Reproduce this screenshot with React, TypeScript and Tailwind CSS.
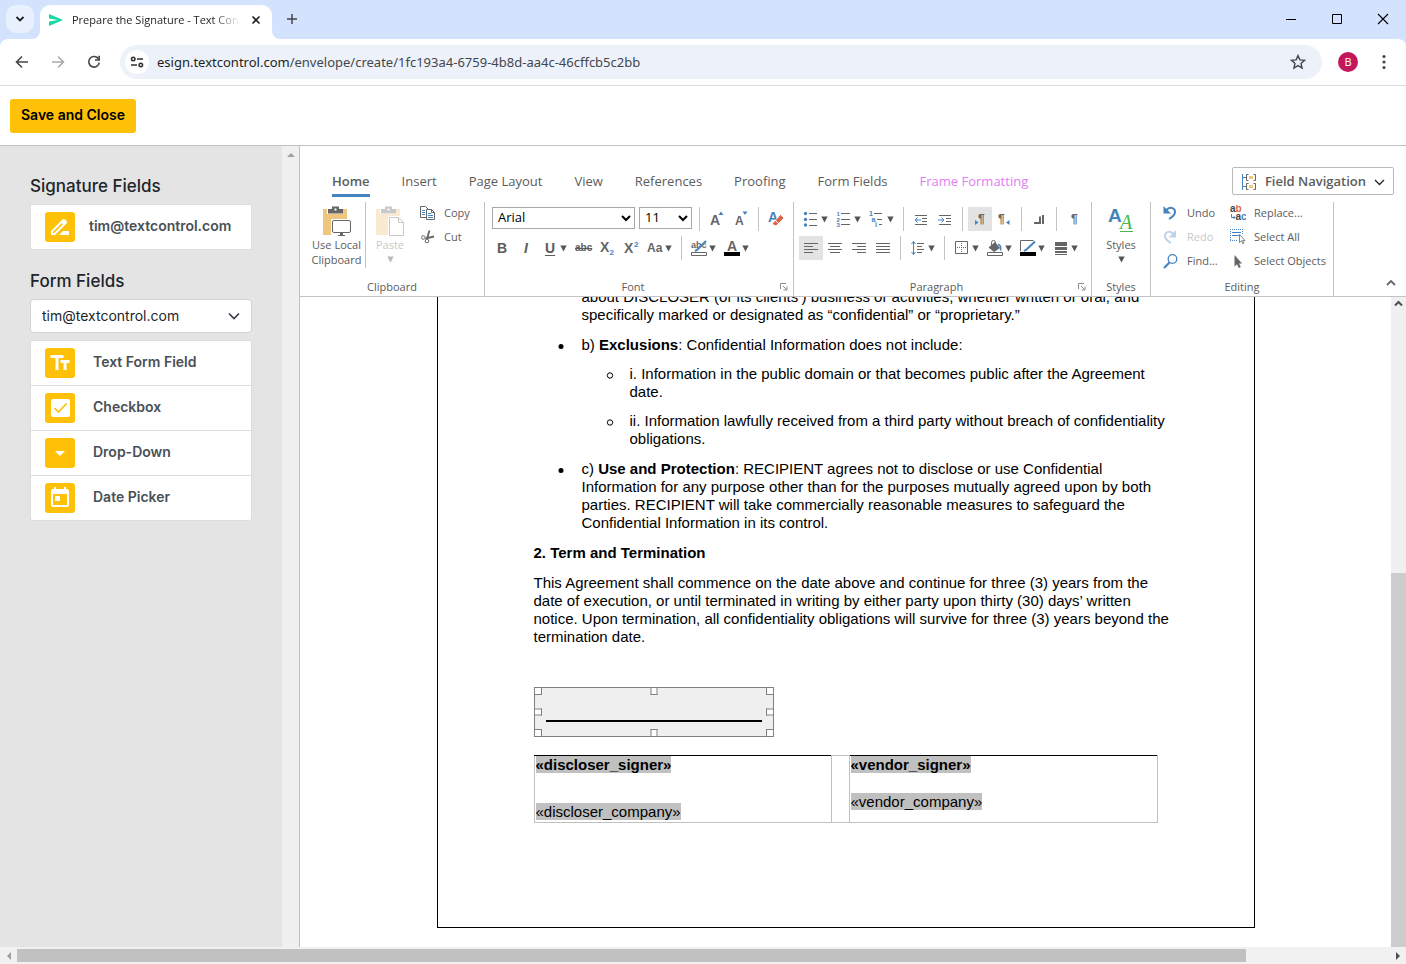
import type { ReactNode } from 'react';
import { MdArrowDropDown, MdDriveFileRenameOutline, MdTextFields, MdToday } from 'react-icons/md';

const INK = '#666666';
const BLUE = '#4682bd';

/* ---------- shared pieces ---------- */

function Icon({ children, size = 16, height }: { children: ReactNode; size?: number; height?: number }) {
  const h = height ?? size;
  return (
    <svg width={size} height={h} viewBox={`0 0 ${size} ${h}`} className="shrink-0" fill="none" aria-hidden="true">
      {children}
    </svg>
  );
}

function Arrow({ dim = false }: { dim?: boolean }) {
  return (
    <svg width="7" height="7" viewBox="0 0 7 7" className="shrink-0" aria-hidden="true">
      <path d="M0.3 0.5h6.4L3.5 6.5z" fill={dim ? '#b9b9b9' : '#555'} />
    </svg>
  );
}

function Tool({ label, active, children }: { label: string; active?: boolean; children: ReactNode }) {
  return (
    <button
      aria-label={label}
      className={`flex h-6 w-6 shrink-0 items-center justify-center ${active ? 'bg-[#e3e3e3]' : ''}`}
    >
      {children}
    </button>
  );
}

function SplitTool({ label, children }: { label: string; children: ReactNode }) {
  return (
    <button aria-label={label} className="flex h-6 shrink-0 items-center gap-0.5 px-1">
      {children}
      <Arrow />
    </button>
  );
}

function Sep() {
  return <span className="mx-[5px] h-6 w-px shrink-0 bg-[#c3c3c3]" />;
}

function Group({ title, launcher, className, children }: { title: string; launcher?: boolean; className: string; children: ReactNode }) {
  return (
    <section className={`relative flex shrink-0 flex-col border-r border-[#c3c3c3] ${className}`}>
      <div className="flex-1">{children}</div>
      <div className={`h-[18px] text-center text-[11px] leading-[18px] ${launcher ? 'pr-3' : ''}`}>{title}</div>
      {launcher && (
        <button aria-label={`${title} settings`} className="absolute right-[5px] bottom-[5px]">
          <Icon size={9}>
            <path d="M1.5 7V1.5H7M4 4l3.5 3.5M8 4.5V8H4.5" stroke="#8a8a8a" />
          </Icon>
        </button>
      )}
    </section>
  );
}

function SmallCommand({ label, icon, dim }: { label: string; icon: ReactNode; dim?: boolean }) {
  return (
    <button disabled={dim} className={`flex h-6 items-center gap-2 pb-0.5 text-[11px] whitespace-nowrap ${dim ? 'text-[#c8c8c8]' : ''}`}>
      {icon}
      {label}
    </button>
  );
}

/* ---------- browser frame ---------- */

function BrowserFrame() {
  return (
    <header className="shrink-0 bg-[#d3e3fd] font-['Open_Sans',sans-serif] text-[#1f1f1f]">
      <div className="flex h-[39px] items-end">
        <button aria-label="Search tabs" className="mr-1.5 mb-1.5 ml-1.5 flex h-7 w-7 items-center justify-center rounded-[10px] bg-[#e9f0fe]">
          <Icon size={10}>
            <path d="M1.5 3l3.5 3.5L8.5 3" stroke="#1f1f1f" strokeWidth="1.8" />
          </Icon>
        </button>
        <div className="relative flex h-[34px] w-[232px] items-center rounded-t-[10px] bg-white pb-[5px] pl-2">
          <svg className="absolute bottom-0 -left-2" width="8" height="8" viewBox="0 0 8 8">
            <path d="M8 0v8H0a8 8 0 0 0 8-8z" fill="#fff" />
          </svg>
          <svg className="absolute -right-2 bottom-0" width="8" height="8" viewBox="0 0 8 8">
            <path d="M0 0v8h8a8 8 0 0 1-8-8z" fill="#fff" />
          </svg>
          <Icon size={16}>
            <path d="M1 2l14 6L1 14V9.5l9-1.5-9-1.5z" fill="#14d9a4" />
          </Icon>
          <span className="ml-2 w-[168px] overflow-hidden pt-px text-[11px] whitespace-nowrap [mask-image:linear-gradient(to_right,#000_84%,transparent)]">
            Prepare the Signature - Text Control
          </span>
          <button aria-label="Close tab" className="ml-[11px]">
            <Icon size={10}>
              <path d="M1.5 1.5l7 7M8.5 1.5l-7 7" stroke="#1f1f1f" strokeWidth="1.6" />
            </Icon>
          </button>
        </div>
        <button aria-label="New tab" className="mb-3.5 ml-[14px]">
          <Icon size={12}>
            <path d="M6 1v10M1 6h10" stroke="#444746" strokeWidth="1.5" />
          </Icon>
        </button>
        <div className="mr-[17px] mb-3.5 ml-auto flex gap-[34px]">
          <button aria-label="Minimize">
            <Icon size={12}>
              <path d="M1 6.5h10" stroke="#000" />
            </Icon>
          </button>
          <button aria-label="Maximize">
            <Icon size={12}>
              <path d="M1.5 1.5h9v9h-9z" stroke="#000" />
            </Icon>
          </button>
          <button aria-label="Close window">
            <Icon size={12}>
              <path d="M1 1l10 10M11 1L1 11" stroke="#000" strokeWidth="1.1" />
            </Icon>
          </button>
        </div>
      </div>
      <div className="flex h-[47px] items-center rounded-t-lg border-b border-[#dadce0] bg-white pr-[14px] pl-[14px]">
        <div className="flex w-[106px] shrink-0 gap-5">
          <button aria-label="Back">
            <Icon size={16}>
              <path d="M8 2.5L2.5 8 8 13.5M2.5 8H14" stroke="#444746" strokeWidth="1.6" />
            </Icon>
          </button>
          <button aria-label="Forward">
            <Icon size={16}>
              <path d="M8 2.5L13.5 8 8 13.5M13.5 8H2" stroke="#a9abad" strokeWidth="1.6" />
            </Icon>
          </button>
          <button aria-label="Reload">
            <Icon size={16}>
              <path d="M12.6 5A5.3 5.3 0 1 0 13.3 8.7" stroke="#444746" strokeWidth="1.6" />
              <path d="M13.2 1.8V6H9" stroke="#444746" strokeWidth="1.6" />
            </Icon>
          </button>
        </div>
        <div className="flex h-[34px] flex-1 items-center rounded-full bg-[#edf1fa] pr-4 pl-[5px]">
          <button aria-label="View site information" className="flex h-6 w-6 items-center justify-center rounded-full bg-white">
            <Icon size={14}>
              <g stroke="#303030" strokeWidth="1.6">
                <circle cx="3.2" cy="4" r="1.7" />
                <path d="M7 4h6M1 10h6" />
                <circle cx="10.8" cy="10" r="1.7" />
              </g>
            </Icon>
          </button>
          <div className="relative ml-2 flex-1 font-['Noto_Sans',sans-serif] text-[13px] leading-5">
            <input aria-label="Address" className="absolute inset-0 w-full bg-transparent text-transparent outline-none" />
            <span>
              esign.textcontrol.com<span className="text-[#44474a]">/envelope/create/1fc193a4-6759-4b8d-aa4c-46cffcb5c2bb</span>
            </span>
          </div>
          <button aria-label="Bookmark">
            <Icon size={16}>
              <path d="M8 1.6l1.9 4.3 4.7.4-3.6 3.1 1.1 4.6L8 11.6 3.9 14 5 9.4 1.4 6.3l4.7-.4z" stroke="#444746" strokeWidth="1.4" />
            </Icon>
          </button>
        </div>
        <button aria-label="Profile" className="ml-4 h-5 w-5 rounded-full bg-[#c2185b] text-center text-[11px] leading-5 text-white">
          B
        </button>
        <button aria-label="Browser menu" className="ml-[18px]">
          <Icon size={16}>
            <g fill="#444746">
              <circle cx="8" cy="2.5" r="1.6" />
              <circle cx="8" cy="8" r="1.6" />
              <circle cx="8" cy="13.5" r="1.6" />
            </g>
          </Icon>
        </button>
      </div>
    </header>
  );
}

/* ---------- sidebar ---------- */

function Badge({ children }: { children: ReactNode }) {
  return <span className="flex h-[30px] w-[30px] items-center justify-center rounded-[3px] bg-[#ffc107] text-white">{children}</span>;
}

const formFields = [
  { label: 'Text Form Field', icon: <MdTextFields size={24} /> },
  {
    label: 'Checkbox',
    icon: (
      <Icon size={20}>
        <rect x="1" y="1" width="19" height="18" rx="2" fill="#fff" />
        <path d="M4.5 10l4 4 8-8.5" stroke="#ffc107" strokeWidth="1.7" />
      </Icon>
    ),
  },
  { label: 'Drop-Down', icon: <MdArrowDropDown size={24} /> },
  { label: 'Date Picker', icon: <MdToday size={24} /> },
];

function Sidebar() {
  return (
    <div className="flex w-[300px] shrink-0 border-r border-[#c0c0c0] font-['Inter',sans-serif]">
      <aside className="flex-1 bg-[#e4e4e4] px-[30px] pt-[30px]">
        <h2 className="text-[17px] leading-5 font-medium text-[#212529]">Signature Fields</h2>
        <button className="mt-2 flex h-[46px] w-full items-center gap-[14px] border border-[#dedfe0] bg-white pl-[14px] text-sm font-semibold text-[#495057]">
          <Badge>
            <MdDriveFileRenameOutline size={24} />
          </Badge>
          <span className="pb-0.5">tim@textcontrol.com</span>
        </button>
        <h2 className="mt-[21px] text-[17px] leading-5 font-medium text-[#212529]">Form Fields</h2>
        <div className="relative mt-2">
          <select
            aria-label="Signer"
            className="block h-[34px] w-full appearance-none rounded border border-[#ced4da] bg-white pl-[11px] text-sm text-[#212529]"
          >
            <option>tim@textcontrol.com</option>
          </select>
          <span className="pointer-events-none absolute top-[11px] right-3">
            <Icon size={12}>
              <path d="M1 3.5l5 5 5-5" stroke="#343a40" strokeWidth="1.6" />
            </Icon>
          </span>
        </div>
        <ul className="mt-[7px] divide-y divide-[#dcdddf] rounded-[3px] border border-[#dcdddf] bg-white">
          {formFields.map((f) => (
            <li key={f.label}>
              <button className="flex h-11 w-full items-center gap-[18px] pl-[14px] text-sm font-semibold text-[#495057]">
                <Badge>{f.icon}</Badge>
                <span className="pb-0.5">{f.label}</span>
              </button>
            </li>
          ))}
        </ul>
      </aside>
      <div className="flex w-[17px] justify-center bg-[#f0f0f0] pt-[7px]">
        <Icon size={8} height={4}>
          <path d="M0 4l4-4 4 4z" fill="#a0a0a0" />
        </Icon>
      </div>
    </div>
  );
}

/* ---------- ribbon ---------- */

const tabs = ['Home', 'Insert', 'Page Layout', 'View', 'References', 'Proofing', 'Form Fields', 'Frame Formatting'];

function tabTone(tab: string) {
  if (tab === 'Home') return 'border-[#4682bd] font-semibold';
  if (tab === 'Frame Formatting') return 'border-transparent text-[#e27df5]';
  return 'border-transparent';
}

function Lines({ rows }: { rows: [number, number][] }) {
  return (
    <Icon size={16}>
      {rows.map(([x, w], i) => (
        <path key={i} d={`M${x} ${3.5 + i * 3}h${w}`} stroke={INK} />
      ))}
    </Icon>
  );
}

function Glyph({ children, className = '' }: { children: ReactNode; className?: string }) {
  return <span className={`w-4 text-center font-['Liberation_Sans',sans-serif] text-sm leading-4 font-bold ${className}`}>{children}</span>;
}

function ClipboardIcon({ dim, variant }: { dim?: boolean; variant: 'screen' | 'page' }) {
  return (
    <svg width="30" height="30" viewBox="0 0 30 30" fill="none" opacity={dim ? 0.35 : 1} aria-hidden="true">
      <path d="M1 3h24v26H1z" fill="#eec67d" />
      <path d="M5 3h16v5H5z" fill="#fff" />
      <path d="M6 3h4V0.500h7V3h4v4.500H6z" fill={INK} />
      <path d="M12.500 2.500h2v2h-2z" fill="#fff" />
      {variant === 'screen' ? (
        <>
          <path d="M9 13h21v17H9z" fill="#fff" />
          <rect x="10.5" y="14.5" width="18" height="12" rx="1.5" stroke={INK} fill="#fff" />
          <path d="M18 27h3v2h-3zM16 29h7v1h-7z" fill={INK} />
        </>
      ) : (
        <>
          <path d="M13 10h17v20H13z" fill="#fff" />
          <path d="M14.5 11.5h9l5 5v13h-14zM23.5 11.5v5h5" stroke={INK} fill="#fff" />
        </>
      )}
    </svg>
  );
}

function FontSelect({ label, value, className }: { label: string; value: string; className: string }) {
  return (
    <div className={`relative shrink-0 ${className}`}>
      <select aria-label={label} className="block h-[22px] w-full appearance-none border border-[#a8a8a8] bg-white pl-[5px] text-[13px] text-black">
        <option>{value}</option>
      </select>
      <span className="pointer-events-none absolute top-1.5 right-1">
        <Icon size={10}>
          <path d="M1 3l4 4 4-4" stroke="#000" strokeWidth="2" />
        </Icon>
      </span>
    </div>
  );
}

function Ribbon() {
  return (
    <div className="z-10 shrink-0 border-b border-[#c3c3c3] bg-white text-[#5c5c5c]">
      <div className="flex h-14 items-end pr-3 pl-4">
        <nav className="mb-[5px] flex">
          {tabs.map((t) => (
            <button key={t} className="px-4 text-[13px] leading-5 whitespace-nowrap">
              <span className={`block border-b-3 pb-[3px] ${tabTone(t)}`}>{t}</span>
            </button>
          ))}
        </nav>
        <button className="mb-[7px] ml-auto flex h-7 w-[162px] items-center justify-between rounded-xs border border-[#b9b9b9] pt-0.5 pr-2 pl-2 text-[13px] font-semibold whitespace-nowrap">
          <Icon size={16}>
            <path d="M1.5 0v16M2 3.5h3M2 12.5h3" stroke={BLUE} />
            <path d="M7.5 0.5h-2v6h2M12.5 0.5h2v6h-2M7.5 9.5h-2v6h2M12.5 9.5h2v6h-2" stroke={INK} />
            <path d="M8 2h4v3H8zM8 11h4v3H8z" fill="#eec67d" />
          </Icon>
          Field Navigation
          <Icon size={11}>
            <path d="M1 3l4.5 4.5L10 3" stroke="#222" strokeWidth="1.3" />
          </Icon>
        </button>
      </div>

      <div className="flex h-[94px]">
        <Group title="Clipboard" className="w-[185px]">
          <div className="flex pl-2">
            <button className="flex h-[66px] w-[58px] flex-col items-center border-r border-[#c3c3c3] pt-1 text-[11px] leading-[15px] whitespace-nowrap">
              <ClipboardIcon variant="screen" />
              <span className="mt-px">Use Local</span>
              <span>Clipboard</span>
            </button>
            <button disabled className="ml-[9px] flex w-[30px] flex-col items-center pt-1 text-[11px] leading-[15px] text-[#c8c8c8]">
              <ClipboardIcon variant="page" dim />
              <span className="mt-px mb-1">Paste</span>
              <Arrow dim />
            </button>
            <div className="ml-[15px]">
              <SmallCommand
                label="Copy"
                icon={
                  <Icon>
                    <path d="M.5 1.5h5l3 3v8h-8z" stroke={INK} fill="#fff" />
                    <path d="M2 5.5h3M2 7.5h3M2 9.5h3" stroke={BLUE} />
                    <path d="M6.5 4.5h5l3 3v7h-8zM11.5 4.5v3h3" stroke={INK} fill="#fff" />
                    <path d="M8 8.5h3M8 10.5h5M8 12.5h5" stroke={BLUE} />
                  </Icon>
                }
              />
              <SmallCommand
                label="Cut"
                icon={
                  <Icon>
                    <path d="M9.5 1.500L7 9.500M14 7.500L5.500 9.500" stroke={INK} strokeWidth="1.8" />
                    <circle cx="3.3" cy="8.5" r="1.8" stroke={INK} />
                    <circle cx="7" cy="12" r="1.800" stroke={INK} />
                  </Icon>
                }
              />
            </div>
          </div>
        </Group>

        <Group title="Font" launcher className="w-[309px]">
          <div className="mt-[5px] flex pl-[7px]">
            <FontSelect label="Font family" value="Arial" className="w-[143px]" />
            <FontSelect label="Font size" value="11" className="mr-0.5 ml-1 w-[53px]" />
            <Sep />
            <Tool label="Grow font">
              <Icon>
                <text x="1" y="14" fill={INK} fontFamily="Liberation Sans" fontWeight="700" fontSize="14">A</text>
                <path d="M9.5 4L12 .5 14.5 4z" fill={BLUE} />
              </Icon>
            </Tool>
            <Tool label="Shrink font">
              <Icon>
                <text x="2" y="14" fill={INK} fontFamily="Liberation Sans" fontWeight="700" fontSize="12">A</text>
                <path d="M9.5 .5L12 4 14.5 .5z" fill={BLUE} />
              </Icon>
            </Tool>
            <Sep />
            <Tool label="Clear formatting">
              <Icon>
                <text x="0" y="11" fill={BLUE} fontFamily="Liberation Sans" fontWeight="700" fontSize="14">A</text>
                <path d="M12.5 3.500l3.500 3.500-7.500 7.500H6l-1.500-2z" fill="#dd6547" stroke="#fff" strokeWidth=".8" />
                <path d="M7 9l3.500 3.500" stroke="#fff" />
              </Icon>
            </Tool>
          </div>
          <div className="mt-[5px] flex pl-[5px]">
            <Tool label="Bold"><Glyph>B</Glyph></Tool>
            <Tool label="Italic"><Glyph className="italic">I</Glyph></Tool>
            <SplitTool label="Underline"><Glyph className="underline underline-offset-2">U</Glyph></SplitTool>
            <Tool label="Strikethrough"><Glyph className="-mx-1 text-[10px] line-through">abc</Glyph></Tool>
            <Tool label="Subscript">
              <Icon>
                <text x="1" y="12" fill={INK} fontFamily="Liberation Sans" fontWeight="700" fontSize="14">X</text>
                <text x="10.5" y="15" fill={BLUE} fontFamily="Liberation Sans" fontWeight="700" fontSize="8">2</text>
              </Icon>
            </Tool>
            <Tool label="Superscript">
              <Icon>
                <text x="1" y="13" fill={INK} fontFamily="Liberation Sans" fontWeight="700" fontSize="14">X</text>
                <text x="11" y="7" fill={BLUE} fontFamily="Liberation Sans" fontWeight="700" fontSize="8">2</text>
              </Icon>
            </Tool>
            <SplitTool label="Change case">
              <Icon>
                <text x="0" y="12" fill={INK} fontFamily="Liberation Sans" fontWeight="700" fontSize="12">Aa</text>
              </Icon>
            </SplitTool>
            <Sep />
            <SplitTool label="Text highlight">
              <Icon>
                <text x="0" y="8" fill={INK} fontFamily="Liberation Sans" fontWeight="700" fontSize="9">abc</text>
                <path d="M15 1L6 10l-2 1" stroke={BLUE} strokeWidth="2" />
                <path d="M.5 12.5h15v3H.5z" stroke={INK} fill="#fff" />
              </Icon>
            </SplitTool>
            <SplitTool label="Font color">
              <Icon>
                <text x="3" y="11" fill={INK} fontFamily="Liberation Sans" fontWeight="700" fontSize="14">A</text>
                <path d="M0 12h16v4H0z" fill="#000" />
              </Icon>
            </SplitTool>
          </div>
        </Group>

        <Group title="Paragraph" launcher className="w-[298px]">
          <div className="mt-[5px] flex pl-[5px]">
            <SplitTool label="Bullets">
              <Icon>
                <g fill={BLUE}>
                  <circle cx="2.5" cy="2.5" r="1.7" />
                  <circle cx="2.5" cy="8.5" r="1.7" />
                  <circle cx="2.5" cy="14" r="1.7" />
                </g>
                <path d="M6 2.5h8M6 8.5h8M6 14.5h8" stroke={INK} />
              </Icon>
            </SplitTool>
            <SplitTool label="Numbering">
              <Icon>
                <g fill={BLUE} fontFamily="Liberation Sans" fontWeight="700" fontSize="6">
                  <text x="0.5" y="5">1</text>
                  <text x="0.5" y="10.5">2</text>
                  <text x="0.5" y="16">3</text>
                </g>
                <path d="M5 2.5h9M5 8.5h9M5 13.5h9" stroke={INK} />
              </Icon>
            </SplitTool>
            <SplitTool label="Multilevel list">
              <Icon>
                <g fill={BLUE} fontFamily="Liberation Sans" fontWeight="700" fontSize="7">
                  <text x="0" y="5">1</text>
                  <text x="2.5" y="10.5">a</text>
                  <text x="6" y="16">i</text>
                </g>
                <path d="M5 2.5h8M8 8.5h5M10 13.5h3" stroke={INK} />
              </Icon>
            </SplitTool>
            <Sep />
            <Tool label="Decrease indent">
              <Icon>
                <path d="M2 4.5h12M9 7.5h5M9 10.5h5M2 13.5h12" stroke={INK} />
                <path d="M2 9h6M4.5 6.5L2 9l2.5 2.5" stroke={BLUE} />
              </Icon>
            </Tool>
            <Tool label="Increase indent">
              <Icon>
                <path d="M2 4.5h12M9 7.5h5M9 10.5h5M2 13.5h12" stroke={INK} />
                <path d="M1 9h6M4.5 6.5L7 9l-2.5 2.5" stroke={BLUE} />
              </Icon>
            </Tool>
            <Sep />
            <Tool label="Left to right" active>
              <Icon>
                <text x="6" y="12" fill={INK} fontFamily="Liberation Sans" fontWeight="700" fontSize="12">¶</text>
                <path d="M3 9l3.500 2.500L3 14z" fill={BLUE} />
              </Icon>
            </Tool>
            <Tool label="Right to left">
              <Icon>
                <text x="2" y="12" fill={INK} fontFamily="Liberation Sans" fontWeight="700" fontSize="12">¶</text>
                <path d="M13.500 9L10 11.500l3.500 2.500z" fill={BLUE} />
              </Icon>
            </Tool>
            <Sep />
            <Tool label="Tab stops">
              <Icon>
                <path d="M3 12h6V5.500M12 4v9" stroke={INK} strokeWidth="2" />
              </Icon>
            </Tool>
            <Sep />
            <Tool label="Control characters">
              <Icon>
                <text x="5" y="12" fill={INK} fontFamily="Liberation Sans" fontWeight="700" fontSize="12">¶</text>
              </Icon>
            </Tool>
          </div>
          <div className="mt-[5px] flex pl-[5px]">
            <Tool label="Align left" active><Lines rows={[[1, 14], [1, 9], [1, 14], [1, 9]]} /></Tool>
            <Tool label="Center"><Lines rows={[[1, 14], [3, 10], [1, 14], [3, 10]]} /></Tool>
            <Tool label="Align right"><Lines rows={[[1, 14], [6, 9], [1, 14], [6, 9]]} /></Tool>
            <Tool label="Justify"><Lines rows={[[1, 14], [1, 14], [1, 14], [1, 14]]} /></Tool>
            <Sep />
            <SplitTool label="Line spacing">
              <Icon>
                <path d="M3.5 2v12M1.5 4l2-2.5 2 2.5M1.5 12l2 2.5 2-2.5" stroke={BLUE} />
                <path d="M7 3.5h7M7 6.5h5M7 9.5h7M7 12.5h5" stroke={INK} />
              </Icon>
            </SplitTool>
            <Sep />
            <SplitTool label="Borders">
              <Icon>
                <path d="M1.5 1.5h12v12h-12z" stroke={INK} />
                <path d="M7.5 3v9M3 7.5h9" stroke={INK} strokeDasharray="1 1" />
              </Icon>
            </SplitTool>
            <SplitTool label="Shading">
              <Icon>
                <path d="M1.5 7.5L8 2l5 6-6 4z" fill={INK} />
                <path d="M4.5 5V2.5a2 2 0 0 1 4 0V6" stroke={INK} />
                <path d="M11 4.5c2.5 0 3 3 2.5 6" stroke={BLUE} strokeWidth="1.6" />
                <path d="M.5 12.5h15v3H.5z" stroke={INK} fill="#fff" />
              </Icon>
            </SplitTool>
            <SplitTool label="Border color">
              <Icon>
                <path d="M13.5 .5H.5V11" stroke={INK} />
                <path d="M15 1.5L6.5 9.5 4 11" stroke={BLUE} strokeWidth="2" />
                <path d="M0 12h16v4H0z" fill="#000" />
              </Icon>
            </SplitTool>
            <SplitTool label="Border width">
              <Icon>
                <path d="M2 2h12v4H2zM2 7h12v3H2zM2 11h12v2H2zM2 14h12v1H2z" fill={INK} />
              </Icon>
            </SplitTool>
          </div>
        </Group>

        <Group title="Styles" className="w-[59px]">
          <button className="flex w-full flex-col items-center pt-1 text-[11px] leading-[15px]">
            <Icon size={28} height={30}>
              <text x="1" y="16" fill={BLUE} fontFamily="Liberation Sans" fontWeight="700" fontSize="19">A</text>
              <text x="13" y="23" fill="#48b648" fontFamily="Liberation Serif" fontStyle="italic" fontSize="20">A</text>
              <path d="M13 25.5h13" stroke="#48b648" />
            </Icon>
            <span className="mt-px mb-1">Styles</span>
            <Arrow />
          </button>
        </Group>

        <Group title="Editing" className="w-[183px]">
          <div className="flex pl-3">
            <div className="w-[67px]">
              <SmallCommand
                label="Undo"
                icon={
                  <Icon>
                    <path d="M3 5.500c3.500-4.500 9-3 9 1.500 0 3-2.500 5-6 7" stroke={BLUE} strokeWidth="2" />
                    <path d="M.5 1v7.500H8z" fill={BLUE} />
                  </Icon>
                }
              />
              <SmallCommand
                label="Redo"
                dim
                icon={
                  <Icon>
                    <g opacity=".35">
                      <path d="M11 5.500C7.500 1 2 2.500 2 7c0 3 2.500 5 6 7" stroke={BLUE} strokeWidth="2" />
                      <path d="M13 1v7.500H5.500z" fill={BLUE} />
                    </g>
                  </Icon>
                }
              />
              <SmallCommand
                label="Find..."
                icon={
                  <Icon>
                    <circle cx="9.5" cy="6" r="4.3" stroke={BLUE} strokeWidth="1.3" />
                    <path d="M6.5 9.5L1 15" stroke={BLUE} strokeWidth="2.2" />
                  </Icon>
                }
              />
            </div>
            <div>
              <SmallCommand
                label="Replace..."
                icon={
                  <Icon>
                    <g fontFamily="Liberation Sans" fontWeight="700" fontSize="10">
                      <text x="0" y="7" fill="#444">a</text>
                      <text x="5.5" y="7" fill="#dd6547">b</text>
                      <text x="5.5" y="15" fill="#444">a</text>
                      <text x="11" y="15" fill={BLUE}>c</text>
                    </g>
                    <path d="M1.5 9v3.5H5M3.5 11L5 12.5 3.5 14" stroke={BLUE} />
                  </Icon>
                }
              />
              <SmallCommand
                label="Select All"
                icon={
                  <Icon>
                    <path d="M0 .5h13M0 11.5h8M.5 0v12M12.5 0v6" stroke={BLUE} strokeDasharray="1 1" />
                    <path d="M2 3.5h9M2 6.5h7" stroke={BLUE} />
                    <path d="M9.5 5.5v8l2-1.8 1.3 3 1.2-.6-1.3-2.6h2.3z" stroke={INK} fill="#fff" strokeWidth=".8" />
                  </Icon>
                }
              />
              <SmallCommand
                label="Select Objects"
                icon={
                  <Icon>
                    <path d="M4.500 2v11.500l2.500-2.300 1.800 3.800 2-.9-1.800-3.600h3z" fill={INK} />
                  </Icon>
                }
              />
            </div>
          </div>
        </Group>
        <div className="flex flex-1 items-end justify-end pr-2.5 pb-2">
          <button aria-label="Collapse ribbon">
            <Icon size={10}>
              <path d="M1 7l4-4 4 4" stroke={INK} strokeWidth="1.8" />
            </Icon>
          </button>
        </div>
      </div>
    </div>
  );
}

/* ---------- document ---------- */

function Para({ lines }: { lines: ReactNode[] }) {
  return (
    <p className="whitespace-nowrap">
      {lines.map((l, i) => (
        <span key={i} className="block">{l}</span>
      ))}
    </p>
  );
}

function Item({ marker = 'disc', children }: { marker?: 'disc' | 'circle' | 'none'; children: ReactNode }) {
  return (
    <li className="relative pl-12">
      <svg className="absolute top-[6px] left-6" width="8" height="8" viewBox="0 0 8 8" aria-hidden="true">
        {marker === 'circle' && <circle cx="4" cy="4.5" r="2.7" stroke="#000" fill="none" />}
        {marker === 'disc' && <circle cx="3" cy="4.5" r="2.5" fill="#000" />}
      </svg>
      {children}
    </li>
  );
}

const handles = [
  'top-0 left-0 border-t-0 border-l-0',
  'top-0 left-1/2 -translate-x-1/2 border-t-0',
  'top-0 right-0 border-t-0 border-r-0',
  'top-1/2 left-0 -translate-y-1/2 border-l-0',
  'top-1/2 right-0 -translate-y-1/2 border-r-0',
  'bottom-0 left-0 border-b-0 border-l-0',
  'bottom-0 left-1/2 -translate-x-1/2 border-b-0',
  'right-0 bottom-0 border-r-0 border-b-0',
];

function MergeField({ children, bold }: { children: ReactNode; bold?: boolean }) {
  return <span className={`bg-[#c0c0c0] ${bold ? 'font-bold' : ''}`}>{children}</span>;
}

function DocumentPage() {
  return (
    <main className="flex flex-1 flex-col items-center justify-end overflow-hidden bg-white pb-[19px]">
      <article className="w-[818px] border border-black px-24 pb-[104px] font-['Liberation_Sans',sans-serif] text-[15px] leading-[18px] text-black">
        <ul className="flex flex-col gap-3">
          <Item marker="none">
            <Para
              lines={[
                'about DISCLOSER (or its clients’) business or activities, whether written or oral, and',
                'specifically marked or designated as “confidential” or “proprietary.”',
              ]}
            />
          </Item>
          <Item>
            <Para lines={[<>b) <b>Exclusions</b>: Confidential Information does not include:</>]} />
            <ul className="mt-[11px] flex flex-col gap-[11px]">
              <Item marker="circle">
                <Para lines={['i. Information in the public domain or that becomes public after the Agreement', 'date.']} />
              </Item>
              <Item marker="circle">
                <Para lines={['ii. Information lawfully received from a third party without breach of confidentiality', 'obligations.']} />
              </Item>
            </ul>
          </Item>
          <Item>
            <Para
              lines={[
                <>c) <b>Use and Protection</b>: RECIPIENT agrees not to disclose or use Confidential</>,
                'Information for any purpose other than for the purposes mutually agreed upon by both',
                'parties. RECIPIENT will take commercially reasonable measures to safeguard the',
                'Confidential Information in its control.',
              ]}
            />
          </Item>
        </ul>
        <h3 className="my-3 font-bold">2. Term and Termination</h3>
        <Para
          lines={[
            'This Agreement shall commence on the date above and continue for three (3) years from the',
            'date of execution, or until terminated in writing by either party upon thirty (30) days’ written',
            'notice. Upon termination, all confidentiality obligations will survive for three (3) years beyond the',
            'termination date.',
          ]}
        />
        <div className="relative mt-[41px] flex h-[50px] w-60 items-end border border-[#808080] bg-[#efefef] px-[11px] pb-[14px]">
          <span className="h-0.5 flex-1 bg-black" />
          {handles.map((h) => (
            <span key={h} className={`absolute h-[7px] w-[7px] border border-[#808080] bg-white ${h}`} />
          ))}
        </div>
        <table className="mt-[18px] w-full border-collapse">
          <tbody>
            <tr className="h-[67px] align-top">
              <td className="w-[297px] border border-t-black border-r-[#c0c0c0] border-b-[#c0c0c0] border-l-[#c0c0c0] px-px">
                <div><MergeField bold>«discloser_signer»</MergeField></div>
                <div className="mt-[29px]"><MergeField>«discloser_company»</MergeField></div>
              </td>
              <td className="w-[18px] border border-[#c0c0c0]" />
              <td className="border border-t-black border-r-[#c0c0c0] border-b-[#c0c0c0] border-l-[#c0c0c0] px-px">
                <div><MergeField bold>«vendor_signer»</MergeField></div>
                <div className="mt-[19px]"><MergeField>«vendor_company»</MergeField></div>
              </td>
            </tr>
          </tbody>
        </table>
      </article>
    </main>
  );
}

export default function App() {
  return (
    <div className="flex h-screen flex-col overflow-hidden bg-white">
      <BrowserFrame />
      <div className="shrink-0 border-b border-[#c0c0c0] px-2.5 pt-[13px] pb-3">
        <button className="h-[34px] rounded-[3px] bg-[#ffc107] px-[11px] pb-0.5 font-['Inter',sans-serif] text-sm font-semibold text-black">
          Save and Close
        </button>
      </div>
      <div className="flex min-h-0 flex-1">
        <Sidebar />
        <div className="flex min-w-0 flex-1 flex-col font-['Open_Sans',sans-serif]">
          <Ribbon />
          <div className="flex min-h-0 flex-1">
            <DocumentPage />
            <div className="flex w-[15px] flex-col justify-between bg-[#f0f0f0]">
              <span className="flex justify-center pt-[2px]">
                <Icon size={9}>
                  <path d="M1 6.5l3.5-3.5L8 6.5" stroke="#505050" strokeWidth="2" />
                </Icon>
              </span>
              <span className="h-[57.5%] bg-[#cdcdcd]" />
            </div>
          </div>
        </div>
      </div>
      <div className="flex h-[17px] shrink-0 items-center bg-[#f1f1f1]">
        <span className="flex w-[17px] justify-center">
          <Icon size={4} height={8}>
            <path d="M4 0v8L0 4z" fill="#a0a0a0" />
          </Icon>
        </span>
        <span className="flex-1">
          <span className="block h-[13px] w-[89.6%] bg-[#c1c1c1]" />
        </span>
        <span className="flex w-[17px] justify-center">
          <Icon size={4} height={8}>
            <path d="M0 0v8l4-4z" fill="#505050" />
          </Icon>
        </span>
      </div>
    </div>
  );
}
